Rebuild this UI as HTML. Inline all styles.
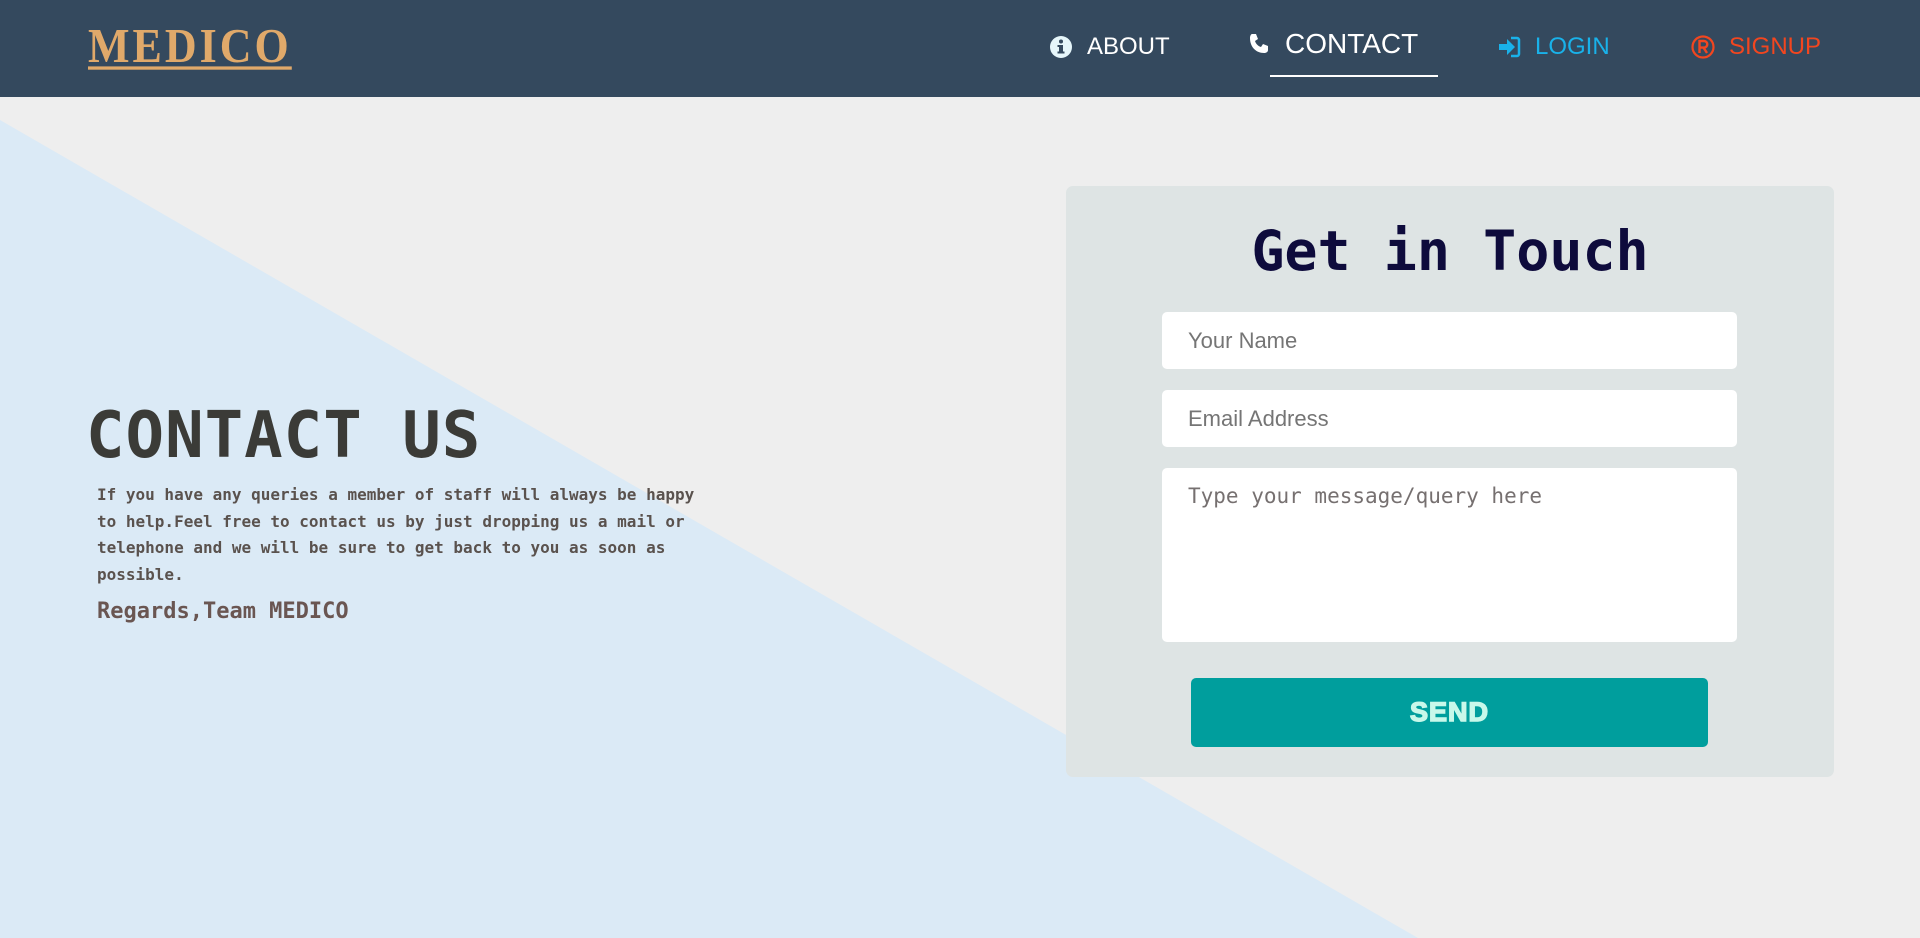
<!DOCTYPE html>
<html><head><meta charset="utf-8"><style>
*{box-sizing:border-box;margin:0;padding:0}
body{width:1920px;height:938px;overflow:hidden;background:#eeeeee;position:relative;font-family:"Liberation Sans",sans-serif}
.tri{position:absolute;left:0;top:0;width:1920px;height:938px}
nav{position:absolute;left:0;top:0;width:1920px;height:97px;background:#34495e}
.logo{position:absolute;left:88px;top:18px;font-family:"Liberation Serif",serif;font-weight:bold;font-size:44px;letter-spacing:3px;color:#e0a96a;text-decoration:underline;text-decoration-thickness:3px;text-underline-offset:4px;transform:scaleY(1.1);transform-origin:top left}
.nl{position:absolute;top:33px;font-size:24px;display:flex;align-items:center;gap:14px}
.nl svg{width:24px;height:24px}
h1{position:absolute;left:86px;top:399px;font-family:"DejaVu Sans Mono","Liberation Mono",monospace;font-weight:bold;font-size:64px;color:#3b3b37;letter-spacing:1px}
.p{position:absolute;left:97px;top:482px;width:600px;font-family:"DejaVu Sans Mono","Liberation Mono",monospace;font-weight:bold;font-size:16px;line-height:26.5px;color:#5a524e}
.reg{position:absolute;left:97px;top:599px;font-family:"DejaVu Sans Mono",monospace;font-weight:bold;font-size:22px;color:#6a5652}
.card{position:absolute;left:1066px;top:186px;width:768px;height:591px;background:#dee4e4;border-radius:7px}
.card h2{position:absolute;left:0;width:100%;top:33px;text-align:center;font-family:"DejaVu Sans Mono",monospace;font-weight:bold;font-size:55px;color:#0e0b3c}
.in{position:absolute;left:96px;width:575px;background:#fff;border-radius:5px;padding-left:26px;font-size:22px;color:#757575;display:flex;align-items:center}
.ta{position:absolute;left:96px;top:282px;width:575px;height:174px;background:#fff;border-radius:5px;padding:16px 26px;font-family:"DejaVu Sans Mono",monospace;font-size:21px;color:#767070}
.btn{position:absolute;left:125px;top:492px;width:517px;height:69px;background:#009e9d;border-radius:5px;color:#c8f8ea;font-weight:900;font-size:27px;display:flex;align-items:center;justify-content:center;letter-spacing:1px;-webkit-text-stroke:1.5px #c8f8ea}
</style></head><body>
<svg class="tri" viewBox="0 0 1920 938"><polygon points="0,120 1418,938 0,938" fill="#dbeaf6"/></svg>
<nav>
<div class="logo">MEDICO</div>
<div class="nl" style="left:1049px;color:#fff"><svg viewBox="0 0 24 24"><circle cx="12" cy="12" r="11" fill="#e6f6fa"/><rect x="10" y="10" width="4" height="8" fill="#34495e"/><rect x="8.5" y="16.5" width="7" height="2" fill="#34495e"/><rect x="8.5" y="10" width="4" height="2" fill="#34495e"/><circle cx="12" cy="6.5" r="2" fill="#34495e"/></svg><span>ABOUT</span></div>
<div class="nl" style="left:1247px;top:28px;color:#fff;font-size:28px;gap:14px"><svg viewBox="0 0 24 24"><path d="M5 2l4 0 2 5-3 2c1 3 3 5 6 6l2-3 5 2 0 4c0 2-2 3-4 3C9 21 3 15 3 6c0-2 1-4 2-4z" fill="#fff"/></svg><span>CONTACT</span></div>
<div style="position:absolute;left:1270px;top:75px;width:168px;height:2px;background:#fff"></div>
<div class="nl" style="left:1497px;color:#19b2ea"><svg viewBox="0 0 24 24"><path d="M2 9h8V4l8 8-8 8v-5H2z" fill="#19b2ea"/><path d="M14 3h6a2 2 0 0 1 2 2v14a2 2 0 0 1-2 2h-6" stroke="#19b2ea" stroke-width="2.5" fill="none"/></svg><span>LOGIN</span></div>
<div class="nl" style="left:1691px;color:#f2461f"><svg viewBox="0 0 24 24"><circle cx="12" cy="12" r="10.5" stroke="#f2461f" stroke-width="2.2" fill="none"/><path d="M8.5 18V6h4.5a3.3 3.3 0 0 1 0 6.6H8.5M12.5 12.6L16 18" stroke="#f2461f" stroke-width="2.4" fill="none"/></svg><span>SIGNUP</span></div>
</nav>
<h1>CONTACT US</h1>
<div class="p">If you have any queries a member of staff will always be happy to help.Feel free to contact us by just dropping us a mail or telephone and we will be sure to get back to you as soon as possible.</div>
<div class="reg">Regards,Team MEDICO</div>
<div class="card">
<h2>Get in Touch</h2>
<div class="in" style="top:126px;height:57px">Your Name</div>
<div class="in" style="top:204px;height:57px">Email Address</div>
<div class="ta">Type your message/query here</div>
<div class="btn">SEND</div>
</div>
</body></html>
